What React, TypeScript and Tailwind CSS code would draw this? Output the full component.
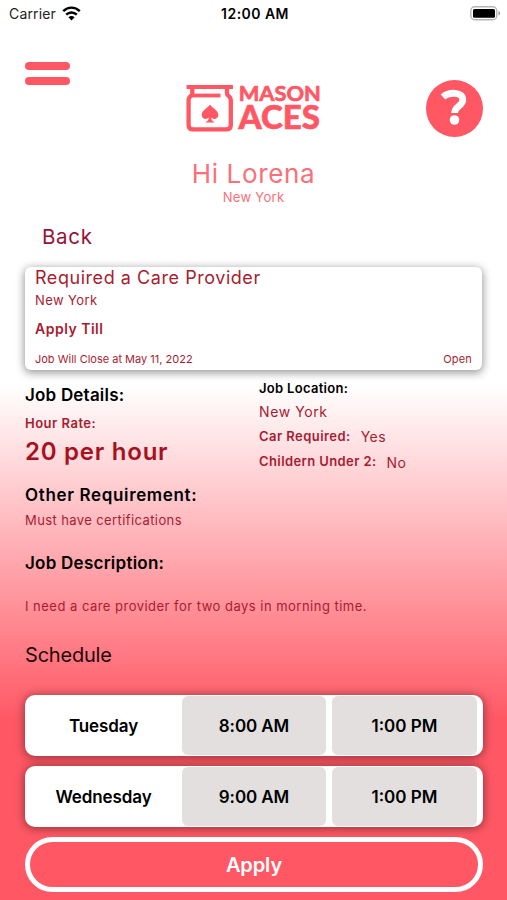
import type { ReactNode } from "react";
import { clsx } from "clsx";

const schedule = [
    { day: "Tuesday", from: "8:00 AM", to: "1:00 PM" },
    { day: "Wednesday", from: "9:00 AM", to: "1:00 PM" },
];

function StatusBar() {
    return (
        <div className="grid grid-cols-3 items-center h-[27px] pl-[9px] pr-[6px] text-[14px] text-black">
            <div className="flex items-center gap-[6px]">
                <span className="text-[#222] tracking-[0.15px]">Carrier</span>
                <svg width="19" height="15" viewBox="0 0 19 15" fill="none" stroke="#000" strokeWidth="2.4">
                    <path d="M1.2 5.2C6 0.4 13 0.4 17.8 5.2" />
                    <path d="M4.2 8.6C7.2 5.7 11.8 5.7 14.8 8.6" />
                    <path d="M9.5 14.4L6.4 11.2C8.2 9.5 10.8 9.5 12.6 11.2Z" fill="#000" stroke="none" />
                </svg>
            </div>
            <span className="text-center font-semibold tracking-[0.45px] whitespace-nowrap">12:00 AM</span>
            <svg className="justify-self-end" width="31" height="15" viewBox="0 0 31 15">
                <rect x="0.8" y="0.8" width="26" height="13" rx="4" fill="#fff" stroke="#b5b5b5" strokeWidth="1.4" />
                <rect x="3" y="3" width="22" height="8.8" rx="1.5" fill="#000" />
                <path d="M28.5 5.2C30.6 5.8 30.6 8.8 28.5 9.4Z" fill="#999" />
            </svg>
        </div>
    );
}

function Logo() {
    return (
        <svg width="136" height="66" viewBox="0 -8 136 66" fill="#ff5864">
            {/* jar */}
            <rect x="0.5" y="1" width="46.5" height="4" rx="0.6" />
            <path
                d="M6.3 5V9.5C6.3 12 2.6 12 2.6 16V41Q2.6 45.4 7 45.4H40.4Q44.8 45.4 44.8 41V16C44.8 12 41 12 41 9.5V5"
                fill="none"
                stroke="#ff5864"
                strokeWidth="4.3"
            />
            <path d="M5 9.6H34.5V13.4H5Z" />
            {/* spade */}
            <path d="M24 20.5C22 24 15.7 26 15.7 31C15.7 34.8 20.4 36.2 22.8 33.6C22.8 35.8 21.8 37.2 19 38.6H29C26.2 37.2 25.2 35.8 25.2 33.6C27.6 36.2 32.3 34.8 32.3 31C32.3 26 26 24 24 20.5Z" />
            <text x="52.8" y="17.4" fontSize="21" fontWeight="700" fontFamily="Lato, sans-serif" textLength="82" lengthAdjust="spacingAndGlyphs" stroke="#ff5864" strokeWidth="0.7">
                MASON
            </text>
            <text x="52.5" y="44.8" fontSize="32.5" fontWeight="900" fontFamily="Lato, sans-serif" textLength="81.5" lengthAdjust="spacingAndGlyphs" stroke="#ff5864" strokeWidth="0.6">
                ACES
            </text>
        </svg>
    );
}

function Header() {
    return (
        <header className="flex justify-between h-[130px] pl-[25px] pr-6">
            <button className="flex flex-col gap-[7px] w-[45px] h-fit mt-[35px]">
                <span className="h-2 w-full rounded-full bg-[#ff5864]" />
                <span className="h-2 w-full rounded-full bg-[#ff5864]" />
            </button>
            <div className="mt-[49px] ml-3">
                <Logo />
            </div>
            <button className="w-[57px] h-[57px] mt-[53px]">
                <svg width="57" height="57" viewBox="0 0 57 57" fill="none">
                    <circle cx="28.5" cy="28.5" r="28.5" fill="#ff5864" />
                    <path d="M17 17C22.5 12 36.8 11.2 36.8 19.8C36.8 26.5 28.6 25.8 28.6 33" stroke="#fff" strokeWidth="6.8" />
                    <circle cx="28.5" cy="40" r="4.8" fill="#fff" />
                </svg>
            </button>
        </header>
    );
}

function Line({ className, children }: { className: string; children: ReactNode }) {
    return <p className={clsx("flex items-center whitespace-nowrap", className)}>{children}</p>;
}

export default function App() {
    return (
        <div className="w-[507px] h-[900px] overflow-hidden bg-[linear-gradient(to_bottom,#fff_385px,#ff5864_720px)] font-['Inter',sans-serif] text-[#a81c30]">
            <StatusBar />
            <Header />
            <div className="flex flex-col items-center text-[#fb7078]">
                <Line className="h-8 text-[26px] tracking-[0.65px]">Hi Lorena</Line>
                <Line className="h-[18px] text-[13px] tracking-[0.3px]">New York</Line>
            </div>
            <Line className="h-6 mt-[18px] ml-[42px] text-[20.5px] tracking-[0.7px] text-[#981234]">Back</Line>

            <section className="mx-[25px] mt-[18px] h-[103px] px-[10px] rounded-md bg-white shadow-[0_2px_9px_1px_rgba(0,0,0,0.4)]">
                <Line className="h-[21px] text-[18px] tracking-[0.55px]">Required a Care Provider</Line>
                <Line className="h-[25px] text-[13px] tracking-[0.4px]">New York</Line>
                <Line className="h-[30px] text-[14px] font-semibold tracking-[0.5px]">Apply Till</Line>
                <div className="flex justify-between h-8 text-[11px]">
                    <Line>Job Will Close at May 11, 2022</Line>
                    <Line className="tracking-[0.2px]">Open</Line>
                </div>
            </section>

            <section className="flex px-[25px] h-[114px]">
                <div className="w-[234px] pt-[14px]">
                    <Line className="h-6 text-[17px] font-semibold tracking-[0.2px] text-black">Job Details:</Line>
                    <Line className="h-8 text-[13px] font-semibold tracking-[0.5px]">Hour Rate:</Line>
                    <Line className="h-6 text-[24px] font-semibold tracking-[0.75px] text-[#a71021]">20 per hour</Line>
                </div>
                <div className="pt-[7px]">
                    <Line className="h-6 text-[13px] font-semibold tracking-[0.3px] text-black">Job Location:</Line>
                    <Line className="h-5 text-[14px] tracking-[0.6px]">New York</Line>
                    <Line className="h-[31px] gap-[10px] text-[13px] font-semibold tracking-[0.45px]">
                        Car Required: <span className="text-[14px] font-normal">Yes</span>
                    </Line>
                    <Line className="h-5 gap-[10px] text-[13px] font-semibold tracking-[0.4px]">
                        Childern Under 2: <span className="text-[14px] font-normal">No</span>
                    </Line>
                </div>
            </section>

            <section className="px-[25px]">
                <Line className="h-6 text-[17px] font-semibold tracking-[0.65px] text-black">Other Requirement:</Line>
                <Line className="h-[26px] text-[13px] tracking-[0.4px]">Must have certifications</Line>
                <Line className="h-6 mt-[18px] text-[17px] font-semibold tracking-[0.25px] text-black">Job Description:</Line>
                <Line className="h-6 mt-[19px] text-[13px] tracking-[0.48px]">I need a care provider for two days in morning time.</Line>
                <Line className="h-6 mt-[24px] text-[20px] tracking-[-0.2px] text-[#1c0809]">Schedule</Line>
            </section>

            <section className="flex flex-col gap-[10px] ml-[25px] mr-6 mt-7 text-[17px] font-semibold text-black">
                {schedule.map((row) => (
                    <div key={row.day} className="flex h-[61px] py-px rounded-[10px] bg-white shadow-[0_1px_10px_1px_rgba(0,0,0,0.4)]">
                        <span className="flex items-center justify-center w-[157px] pt-0.5 tracking-[-0.1px]">{row.day}</span>
                        <span className="flex items-center justify-center w-[144px] pt-0.5 rounded-md bg-[#e2dfde] tracking-[-0.1px]">{row.from}</span>
                        <span className="flex items-center justify-center w-[145px] ml-[6px] pt-0.5 rounded-md bg-[#e2dfde]">{row.to}</span>
                    </div>
                ))}
            </section>

            <div className="pl-[25px] pr-6 pt-[10px]">
                <button className="w-full h-[55px] rounded-full border-[5px] border-white bg-[#ff5864] text-[20px] font-semibold tracking-[-0.1px] text-white">
                    Apply
                </button>
            </div>
        </div>
    );
}
